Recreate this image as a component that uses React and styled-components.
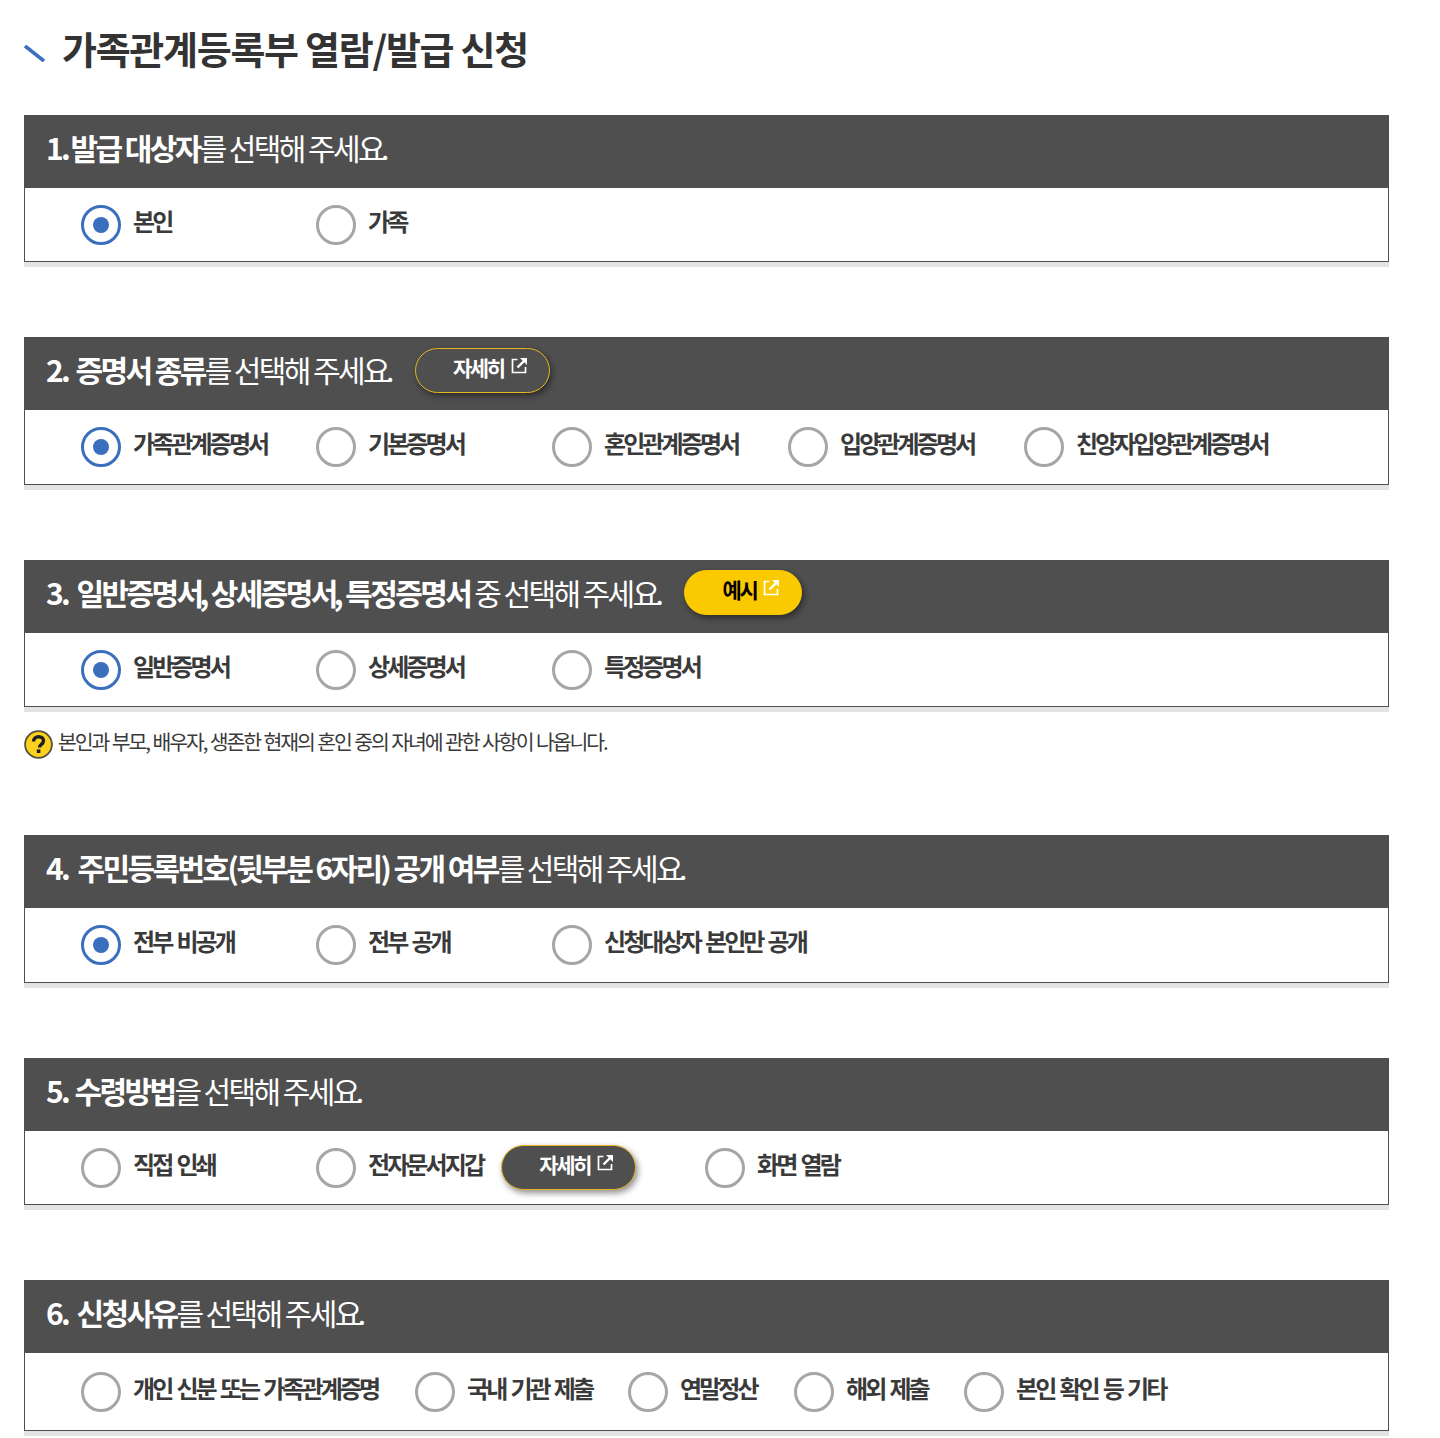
import React from "react";
import styled, { createGlobalStyle } from "styled-components";

const Global = createGlobalStyle`
  html, body { margin: 0; padding: 0; background: #fff; }
  body { font-family: "Noto Sans CJK KR", "Noto Sans", sans-serif; color: #333; }
`;
const Page = styled.div`
  width: 1365px;
  padding: 22px 0 7px 24px;
`;
const Title = styled.h1`
  display: flex;
  align-items: center;
  gap: 16px;
  margin: 0 0 41px;
  height: 52px;
  font-size: 38px;
  line-height: 52px;
  font-weight: 700;
  letter-spacing: -1.28px;
  color: #333;
`;
const Section = styled.section`
  margin-bottom: ${p => p.$gap}px;
`;
const Header = styled.div`
  display: flex;
  align-items: center;
  box-sizing: border-box;
  height: 73px;
  padding: 0 0 10px 22px;
  background: #4f4f4f;
  color: #fff;
`;
const HeaderText = styled.h2`
  margin: 0;
  font-size: 30px;
  line-height: 40px;
  font-weight: 400;
  letter-spacing: -2.6px;
  white-space: pre;
  strong { font-weight: 700; }
`;
const Num = styled.span`
  margin-right: ${p => p.$shift}px;
`;
const Tight = styled.span`
  margin-left: -2px;
`;
const Body = styled.div`
  display: flex;
  align-items: flex-start;
  height: ${p => p.$height}px;
  box-sizing: border-box;
  padding: ${p => p.$top ?? 16}px 0 0 56px;
  background: #fff;
  border: 1px solid #4f4f4f;
  border-top: 0;
  box-shadow: 0 5px 0 #e3e3e3;
`;
const Option = styled.label`
  display: flex;
  align-items: flex-start;
  flex: none;
  width: ${p => (p.$width ? `${p.$width}px` : "auto")};
  margin-left: ${p => p.$left ?? 0}px;
`;
const Radio = styled.span`
  flex: none;
  box-sizing: border-box;
  width: 40px;
  height: 40px;
  margin-top: 1px;
  border-radius: 50%;
  border: 3px solid ${p => (p.$on ? "#3b6fbe" : "#a6a6a6")};
  display: flex;
  align-items: center;
  justify-content: center;
  &::after {
    content: "";
    display: ${p => (p.$on ? "block" : "none")};
    width: 16px;
    height: 16px;
    border-radius: 50%;
    background: #3b6fbe;
  }
`;
const Label = styled.span`
  margin-left: 12px;
  margin-top: -1px;
  font-size: 24px;
  line-height: 36px;
  font-weight: 700;
  letter-spacing: -2.9px;
  word-spacing: 2.5px;
  color: #3a3a3a;
  white-space: nowrap;
`;
const Pill = styled.span`
  display: inline-flex;
  align-items: center;
  justify-content: flex-end;
  flex: none;
  box-sizing: border-box;
  height: 45px;
  width: ${p => p.$width}px;
  margin: ${p => p.$top ?? 4}px 0 0 ${p => p.$left}px;
  padding: 0 21px 8px 0;
  gap: 7px;
  border-radius: 23px;
  border: 1px solid ${p => (p.$variant === "yellow" ? "#fbc900" : "#e6b71e")};
  background: ${p => (p.$variant === "yellow" ? "#fbc900" : "#4f4f4f")};
  color: ${p => (p.$variant === "yellow" ? "#000" : "#fff")};
  font-size: 21px;
  font-weight: 700;
  letter-spacing: -2.4px;
  box-shadow: 2px 3px 6px rgba(0, 0, 0, 0.45);
  white-space: nowrap;
`;
const ExternalIcon = styled.svg`
  flex: none;
  margin-bottom: 2px;
  color: #fff;
`;
const Note = styled.p`
  display: flex;
  align-items: flex-start;
  gap: 5px;
  margin: 0;
  padding: 19px 0 1px;
  font-size: 20.5px;
  line-height: 30px;
  letter-spacing: -2.1px;
  word-spacing: 1px;
  color: #3a3a3a;
`;
const HelpIcon = styled.svg`
  flex: none;
  margin-top: 4px;
`;
const TitleMark = styled.svg`
  flex: none;
  margin-top: 10px;
`;

const External = () => (
  <ExternalIcon width="17" height="17" viewBox="0 0 17 17" fill="none" stroke="currentColor" aria-hidden="true">
    <path d="M6.5 2.5H1.5v13h13V10" strokeWidth="1.7" />
    <path d="M6.5 10.5L14.5 2.5" strokeWidth="2.4" />
    <path d="M9 1h7v7z" fill="currentColor" stroke="none" />
  </ExternalIcon>
);
const Help = () => (
  <HelpIcon width="29" height="29" viewBox="0 0 29 29" aria-hidden="true">
    <circle cx="14.5" cy="14.5" r="13.4" fill="#fcd21f" stroke="#55503a" strokeWidth="1.8" />
    <path d="M9.6 11.4c0-3 2.1-4.7 5-4.7 3 0 4.9 1.7 4.9 4.1 0 2-1.2 3-2.6 4-1 .7-1.4 1.2-1.4 2.6" fill="none" stroke="#1e1e1e" strokeWidth="3.4" />
    <rect x="12.8" y="19.4" width="3.6" height="3.6" fill="#1e1e1e" />
  </HelpIcon>
);
const Arrow = () => (
  <TitleMark width="22" height="17" viewBox="0 0 22 17" aria-hidden="true">
    <path d="M1 1l19 15" stroke="#3b6fbe" strokeWidth="3.6" />
  </TitleMark>
);

const Opt = ({ on, width, left, children }) => (
  <Option $width={width} $left={left}>
    <Radio $on={on} />
    <Label>{children}</Label>
  </Option>
);

const Ending = () => <>주세요<Tight>.</Tight></>;

export default function App() {
  return (
    <Page>
      <Global />
      <Title><Arrow />가족관계등록부 열람/발급 신청</Title>

      <Section $gap={75}>
        <Header><HeaderText><strong><Num $shift={-2}>1.</Num> 발급 대상자</strong>를 선택해 <Ending /></HeaderText></Header>
        <Body $height={74}>
          <Opt on width={235}>본인</Opt>
          <Opt width={236}>가족</Opt>
        </Body>
      </Section>

      <Section $gap={75}>
        <Header>
          <HeaderText><strong><Num $shift={3}>2.</Num> 증명서 종류</strong>를 선택해 <Ending /></HeaderText>
          <Pill $width={135} $left={23}>자세히 <External /></Pill>
        </Header>
        <Body $height={75}>
          <Opt on width={235}>가족관계증명서</Opt>
          <Opt width={236}>기본증명서</Opt>
          <Opt width={236}>혼인관계증명서</Opt>
          <Opt width={236}>입양관계증명서</Opt>
          <Opt>친양자입양관계증명서</Opt>
        </Body>
      </Section>

      <Section $gap={75}>
        <Header>
          <HeaderText><strong><Num $shift={4}>3.</Num> 일반증명서<Tight>,</Tight> 상세증명서<Tight>,</Tight> 특정증명서</strong> 중 선택해 <Ending /></HeaderText>
          <Pill $width={118} $left={23} $top={2} $variant="yellow">예시 <External /></Pill>
        </Header>
        <Body $height={74}>
          <Opt on width={235}>일반증명서</Opt>
          <Opt width={236}>상세증명서</Opt>
          <Opt width={236}>특정증명서</Opt>
        </Body>
        <Note><Help />본인과 부모, 배우자, 생존한 현재의 혼인 중의 자녀에 관한 사항이 나옵니다.</Note>
      </Section>

      <Section $gap={75}>
        <Header><HeaderText><strong><Num $shift={5}>4.</Num> 주민등록번호(뒷부분 6자리) 공개 여부</strong>를 선택해 <Ending /></HeaderText></Header>
        <Body $height={75}>
          <Opt on width={235}>전부 비공개</Opt>
          <Opt width={236}>전부 공개</Opt>
          <Opt>신청대상자 본인만 공개</Opt>
        </Body>
      </Section>

      <Section $gap={75}>
        <Header><HeaderText><strong><Num $shift={2}>5.</Num> 수령방법</strong>을 선택해 <Ending /></HeaderText></Header>
        <Body $height={74}>
          <Opt width={235}>직접 인쇄</Opt>
          <Opt>전자문서지갑</Opt>
          <Pill $width={135} $left={18} $top={-2}>자세히 <External /></Pill>
          <Opt left={69}>화면 열람</Opt>
        </Body>
      </Section>

      <Section $gap={0}>
        <Header><HeaderText><strong><Num $shift={4}>6.</Num> 신청사유</strong>를 선택해 <Ending /></HeaderText></Header>
        <Body $height={78} $top={18}>
          <Opt width={334}>개인 신분 또는 가족관계증명</Opt>
          <Opt width={213}>국내 기관 제출</Opt>
          <Opt width={166}>연말정산</Opt>
          <Opt width={170}>해외 제출</Opt>
          <Opt>본인 확인 등 기타</Opt>
        </Body>
      </Section>
    </Page>
  );
}
